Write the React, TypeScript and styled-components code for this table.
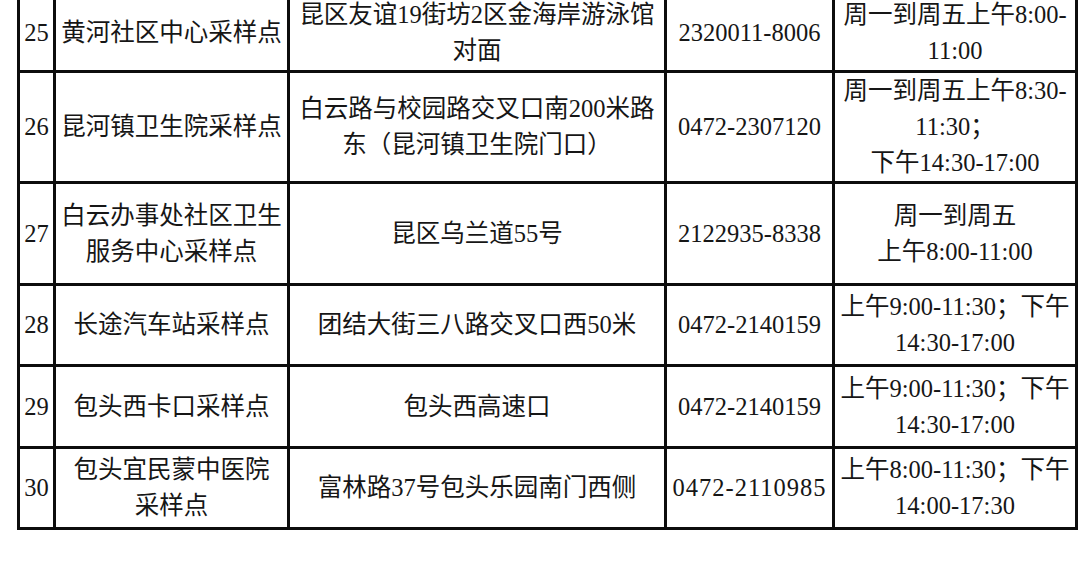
import React from "react";
import styled, { createGlobalStyle } from "styled-components";

type Site = {
  no: string;
  name: string[];
  address: string[];
  phone: string;
  hours: string[];
  height: number;
  widePhone?: boolean;
};

const sites: Site[] = [
  {
    no: "25",
    name: ["黄河社区中心采样点"],
    address: ["昆区友谊19街坊2区金海岸游泳馆", "对面"],
    phone: "2320011-8006",
    hours: ["周一到周五上午8:00-", "11:00"],
    height: 78,
  },
  {
    no: "26",
    name: ["昆河镇卫生院采样点"],
    address: ["白云路与校园路交叉口南200米路", "东（昆河镇卫生院门口）"],
    phone: "0472-2307120",
    hours: ["周一到周五上午8:30-", "11:30；", "下午14:30-17:00"],
    height: 111,
  },
  {
    no: "27",
    name: ["白云办事处社区卫生", "服务中心采样点"],
    address: ["昆区乌兰道55号"],
    phone: "2122935-8338",
    hours: ["周一到周五", "上午8:00-11:00"],
    height: 102,
  },
  {
    no: "28",
    name: ["长途汽车站采样点"],
    address: ["团结大街三八路交叉口西50米"],
    phone: "0472-2140159",
    hours: ["上午9:00-11:30；下午", "14:30-17:00"],
    height: 81,
  },
  {
    no: "29",
    name: ["包头西卡口采样点"],
    address: ["包头西高速口"],
    phone: "0472-2140159",
    hours: ["上午9:00-11:30；下午", "14:30-17:00"],
    height: 82,
  },
  {
    no: "30",
    name: ["包头宜民蒙中医院", "采样点"],
    address: ["富林路37号包头乐园南门西侧"],
    phone: "0472-2110985",
    hours: ["上午8:00-11:30；下午", "14:00-17:30"],
    height: 81,
    widePhone: true,
  },
];

// column widths, measured between the grid lines
const columns = [36, 234, 377, 168, 243];

const GlobalStyle = createGlobalStyle`
  html, body {
    margin: 0;
    padding: 0;
    background: #fff;
  }
  body {
    overflow: hidden;
  }
`;

const Page = styled.div`
  width: 1080px;
  height: 563px;
  overflow: hidden;
  background: #fff;
  padding-left: 17px;
  box-sizing: border-box;
`;

const Table = styled.table`
  margin-top: -8px;
  border-collapse: collapse;
  table-layout: fixed;
  width: 1061px;
  font-family: "Liberation Serif", "Noto Sans CJK SC", serif;
  font-size: 24.5px;
  color: #161616;
`;

const Col = styled.col<{ $w: number }>`
  width: ${(p) => p.$w}px;
`;

const Row = styled.tr<{ $h: number }>`
  height: ${(p) => p.$h}px;
`;

const Cell = styled.td<{ $wide?: boolean }>`
  border: 3px solid #0d0d0d;
  padding: 0;
  text-align: center;
  vertical-align: middle;
  line-height: 36px;
  white-space: nowrap;
  letter-spacing: ${(p) => (p.$wide ? "1px" : "0")};
`;

const Lines = ({ lines }: { lines: string[] }) => (
  <>
    {lines.map((l, i) => (
      <React.Fragment key={i}>
        {i > 0 && <br />}
        {l}
      </React.Fragment>
    ))}
  </>
);

export default function App() {
  return (
    <Page>
      <GlobalStyle />
      <Table>
        <colgroup>
          {columns.map((w, i) => (
            <Col key={i} $w={w} />
          ))}
        </colgroup>
        <tbody>
          {sites.map((s) => (
            <Row key={s.no} $h={s.height}>
              <Cell>{s.no}</Cell>
              <Cell>
                <Lines lines={s.name} />
              </Cell>
              <Cell>
                <Lines lines={s.address} />
              </Cell>
              <Cell $wide={s.widePhone}>{s.phone}</Cell>
              <Cell>
                <Lines lines={s.hours} />
              </Cell>
            </Row>
          ))}
        </tbody>
      </Table>
    </Page>
  );
}
